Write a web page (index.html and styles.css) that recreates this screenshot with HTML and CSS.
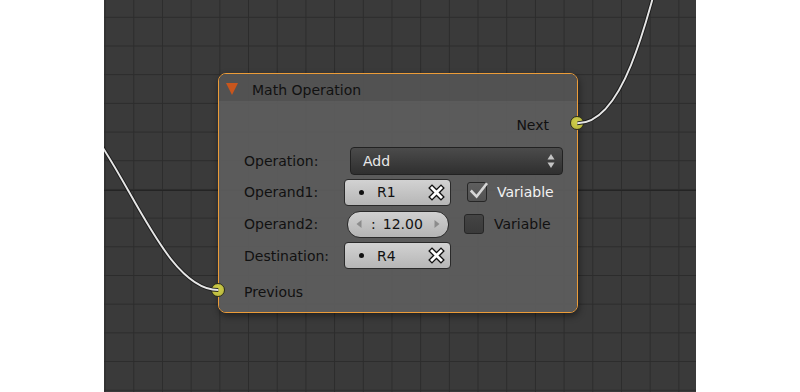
FILE: index.html
```html
<!DOCTYPE html>
<html lang="en">
<head>
<meta charset="UTF-8">
<meta name="viewport" content="width=device-width, initial-scale=1.0">
<title>Node Editor</title>
<link rel="stylesheet" href="styles.css">
</head>
<body>
<div class="editor">
    <div class="node">
        <div class="node-header">
            <span class="collapse"></span>
            <span class="node-title">Math Operation</span>
        </div>
        <div class="node-body">
            <div class="socket-row out">Next</div>

            <div class="prop-row">
                <span class="prop-label">Operation:</span>
                <div class="menu">
                    <span>Add</span>
                    <svg class="menu-arrows" width="8" height="16" viewBox="0 0 8 16">
                        <path d="M4 1 L7.5 6.5 L0.5 6.5 Z" fill="#c4c4c4"/>
                        <path d="M4 15 L7.5 9.5 L0.5 9.5 Z" fill="#c4c4c4"/>
                    </svg>
                </div>
            </div>

            <div class="prop-row">
                <span class="prop-label">Operand1:</span>
                <div class="field">
                    <span class="dot"></span>
                    <span class="field-text">R1</span>
                    <svg class="clear" width="17" height="17" viewBox="0 0 17 17">
                        <path d="M4 4 L13 13 M13 4 L4 13" stroke="#111" stroke-width="5.4" stroke-linecap="square"/>
                        <path d="M4 4 L13 13 M13 4 L4 13" stroke="#fff" stroke-width="2.8" stroke-linecap="square"/>
                    </svg>
                </div>
                <span class="check on">
                    <svg width="22" height="20" viewBox="0 0 22 20">
                        <path d="M3.8 8.5 L9.6 14.6 L20 1.2" fill="none" stroke="#d6d6d6" stroke-width="2.6"/>
                    </svg>
                </span>
                <span class="check-label light">Variable</span>
            </div>

            <div class="prop-row">
                <span class="prop-label">Operand2:</span>
                <div class="number">
                    <svg class="num-arrow" width="6" height="10" viewBox="0 0 6 10"><path d="M0.5 5 L5.5 1 L5.5 9 Z" fill="#8c8c8c"/></svg>
                    <span class="num-colon">:</span>
                    <span class="num-value">12.00</span>
                    <svg class="num-arrow" width="6" height="10" viewBox="0 0 6 10"><path d="M5.5 5 L0.5 1 L0.5 9 Z" fill="#8c8c8c"/></svg>
                </div>
                <span class="check off"></span>
                <span class="check-label">Variable</span>
            </div>

            <div class="prop-row">
                <span class="prop-label">Destination:</span>
                <div class="field">
                    <span class="dot"></span>
                    <span class="field-text">R4</span>
                    <svg class="clear" width="17" height="17" viewBox="0 0 17 17">
                        <path d="M4 4 L13 13 M13 4 L4 13" stroke="#111" stroke-width="5.4" stroke-linecap="square"/>
                        <path d="M4 4 L13 13 M13 4 L4 13" stroke="#fff" stroke-width="2.8" stroke-linecap="square"/>
                    </svg>
                </div>
            </div>

            <div class="socket-row in">Previous</div>
        </div>
        <span class="socket socket-next"></span>
        <span class="socket socket-prev"></span>
    </div>

    <!-- noodles are drawn over the sockets -->
    <svg class="wires" width="592" height="392" viewBox="0 0 592 392">
        <path d="M114.3 290 C46 290, 4 94, -64 94" fill="none" stroke="#1c1c1c" stroke-width="3.8"/>
        <path d="M114.3 290 C46 290, 4 94, -64 94" fill="none" stroke="#e6e6e6" stroke-width="1.9"/>
        <path d="M473.3 123.3 C563 123.3, 566 -250, 656 -250" fill="none" stroke="#1c1c1c" stroke-width="3.8"/>
        <path d="M473.3 123.3 C563 123.3, 566 -250, 656 -250" fill="none" stroke="#e6e6e6" stroke-width="1.9"/>
    </svg>
</div>
</body>
</html>
```

FILE: styles.css
```css
body {
    margin: 0;
    background-color: #fff;
    font-family: "DejaVu Sans", "Liberation Sans", sans-serif;
    font-size: 14px;
}
.editor {
    position: relative;
    width: 592px;
    height: 392px;
    margin: 0 auto;
    overflow: hidden;
    background-color: #3a3a3a;
    background-image:
        linear-gradient(to bottom, transparent 189.5px, #242424 189.5px, #242424 190.5px, transparent 190.5px),
        linear-gradient(to bottom, #2c2c2c 1px, transparent 1px),
        linear-gradient(to right, #2c2c2c 1px, transparent 1px);
    background-size: 100% 100%, 28.7px 28.7px, 28.7px 28.7px;
    background-position: 0 0, 0 16.8px, 0.6px 0;
    background-repeat: no-repeat, repeat, repeat;
}
.wires {
    position: absolute;
    left: 0;
    top: 0;
    pointer-events: none;
}
.node {
    position: absolute;
    left: 114px;
    top: 73px;
    width: 360px;
    box-sizing: border-box;
    border: 1px solid #ec9c38;
    border-radius: 8px;
    box-shadow: 1px 3px 7px rgba(0, 0, 0, 0.45);
}
.node-header {
    display: flex;
    align-items: center;
    height: 27px;
    padding-left: 7px;
    background-color: rgba(84, 84, 84, 0.93);
    border-radius: 7px 7px 0 0;
    color: #111;
}
.collapse {
    width: 0;
    height: 0;
    border-left: 6.5px solid transparent;
    border-right: 6.5px solid transparent;
    border-top: 12px solid #c8561d;
    margin-top: 3px;
}
.node-title {
    margin-left: 14px;
    margin-top: 4px;
}
.node-body {
    padding: 14px 14px 10px 25px;
    background-color: rgba(94, 94, 94, 0.93);
    border-radius: 0 0 7px 7px;
    color: #111;
}
.socket-row {
    height: 20px;
    line-height: 20px;
}
.socket-row.out {
    text-align: right;
    padding-right: 14px;
    margin-bottom: 12px;
}
.socket-row.in {
    margin-top: 13px;
}
.prop-row {
    display: flex;
    align-items: center;
    height: 27px;
    margin-bottom: 4.8px;
}
.prop-label {
    width: 100px;
    flex-shrink: 0;
}
.menu {
    flex: 1;
    display: flex;
    align-items: center;
    justify-content: space-between;
    height: 28px;
    margin-left: 6px;
    padding: 0 7px 0 12px;
    box-sizing: border-box;
    border: 1px solid #222;
    border-radius: 4px;
    background: linear-gradient(#4b4b4b, #2f2f2f);
    color: #e8e8e8;
}
.field {
    display: flex;
    align-items: center;
    width: 107px;
    height: 27px;
    box-sizing: border-box;
    padding: 0 5px 0 14px;
    border: 1px solid #2a2a2a;
    border-radius: 4px;
    background: linear-gradient(#d2d2d2, #b6b6b6);
}
.dot {
    width: 5px;
    height: 5px;
    border-radius: 50%;
    background-color: #111;
}
.field-text {
    flex: 1;
    margin-left: 13px;
}
.clear {
    display: block;
}
.number {
    display: flex;
    align-items: center;
    width: 102px;
    height: 27px;
    margin-left: 3px;
    box-sizing: border-box;
    padding: 0 8px 0 8px;
    border: 1px solid #2a2a2a;
    border-radius: 13px;
    background: linear-gradient(#d0d0d0, #b4b4b4);
}
.num-arrow {
    display: block;
}
.num-colon {
    margin-left: 9px;
}
.num-value {
    flex: 1;
    margin-left: 7px;
}
.check {
    width: 20px;
    height: 20px;
    box-sizing: border-box;
    border: 1px solid #262626;
    border-radius: 3px;
    flex-shrink: 0;
}
.check svg {
    display: block;
    margin: -1px 0 0 -1px;
    overflow: visible;
}
.check.on {
    margin-left: 16px;
    background: linear-gradient(#5e5e5e, #525252);
}
.check.off {
    margin-left: 15px;
    background: linear-gradient(#444, #3a3a3a);
}
.check-label {
    margin-left: 10px;
    color: #111;
}
.check-label.light {
    color: #f2f2f2;
}
.socket {
    position: absolute;
    width: 12px;
    height: 12px;
    border: 1px solid #2e2e18;
    border-radius: 50%;
    background: radial-gradient(circle at 45% 40%, #d0cf4c, #b3b23a);
}
.socket-next {
    left: 351px;
    top: 42px;
}
.socket-prev {
    left: -8px;
    top: 208.5px;
}
```
